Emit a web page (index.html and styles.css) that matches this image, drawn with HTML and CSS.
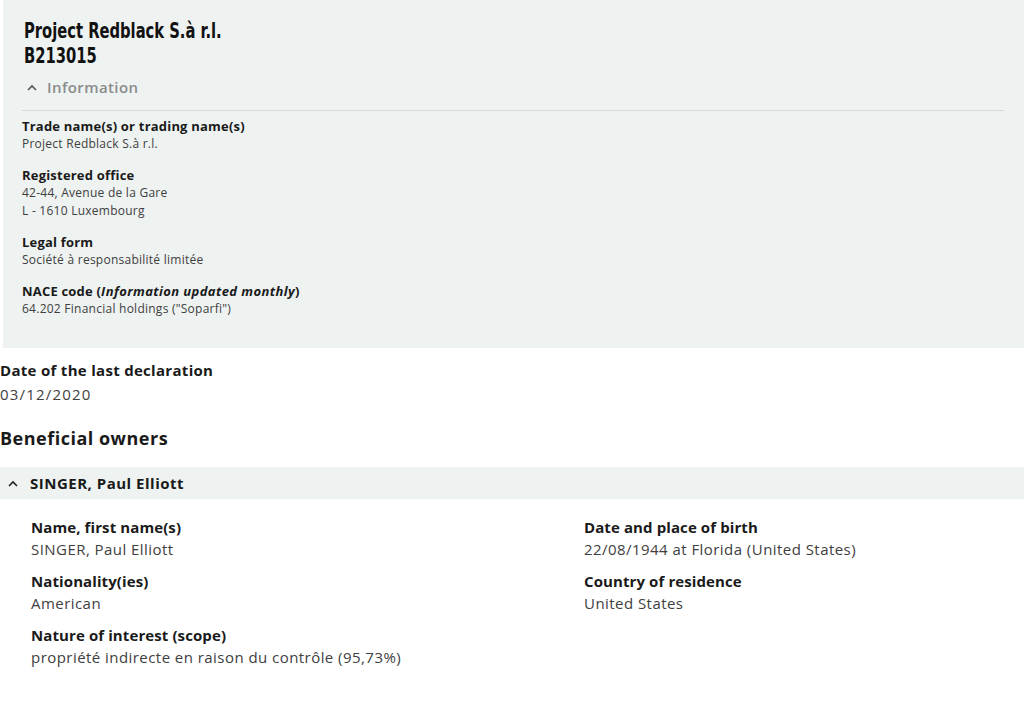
FILE: index.html
```html
<!DOCTYPE html>
<html>
<head>
<meta charset="utf-8">
<link rel="stylesheet" href="styles.css">
</head>
<body>
<div class="page">
  <section class="panel">
    <h1 class="title"><span class="title-line">Project Redblack S.à r.l.</span><span class="title-line">B213015</span></h1>
    <div class="toggle">
      <svg class="chev" width="10" height="7" viewBox="0 0 10 7"><polyline points="1,6 5,2 9,6" fill="none" stroke="#555" stroke-width="1.6"/></svg>
      <span>Information</span>
    </div>
    <hr class="sep">
    <dl class="info">
      <div class="item"><dt>Trade name(s) or trading name(s)</dt><dd>Project Redblack S.à r.l.</dd></div>
      <div class="item"><dt>Registered office</dt><dd>42-44, Avenue de la Gare<br>L - 1610 Luxembourg</dd></div>
      <div class="item"><dt>Legal form</dt><dd>Société à responsabilité limitée</dd></div>
      <div class="item"><dt>NACE code (<em>Information updated monthly</em>)</dt><dd>64.202 Financial holdings ("Soparfi")</dd></div>
    </dl>
  </section>

  <div class="decl">
    <div class="decl-label">Date of the last declaration</div>
    <div class="decl-value">03/12/2020</div>
  </div>

  <h2 class="owners">Beneficial owners</h2>

  <div class="bar">
    <svg class="chev" width="10" height="7" viewBox="0 0 10 7"><polyline points="1,6 5,2 9,6" fill="none" stroke="#222" stroke-width="1.6"/></svg>
    <span>SINGER, Paul Elliott</span>
  </div>

  <div class="owner-grid">
    <div class="field"><div class="fl">Name, first name(s)</div><div class="fv">SINGER, Paul Elliott</div></div>
    <div class="field"><div class="fl">Date and place of birth</div><div class="fv">22/08/1944 at Florida (United States)</div></div>
    <div class="field"><div class="fl">Nationality(ies)</div><div class="fv">American</div></div>
    <div class="field"><div class="fl">Country of residence</div><div class="fv">United States</div></div>
    <div class="field"><div class="fl">Nature of interest (scope)</div><div class="fv">propriété indirecte en raison du contrôle (95,73%)</div></div>
  </div>
</div>
</body>
</html>
```

FILE: styles.css
```css
* { box-sizing: border-box; }
html, body { margin: 0; padding: 0; background: #fff; }
body { font-family: "Open Sans", "Lato", sans-serif; color: #222; width: 1024px; height: 704px; overflow: hidden; }

.panel {
  margin-left: 3px;
  background: #eef2f1;
  height: 348px;
  padding: 19px 20px 0 19px;
}
.title {
  margin: 0 0 0 2px;
  font-family: "DejaVu Sans Condensed", "DejaVu Sans", sans-serif;
  font-weight: 700;
  font-size: 21px;
  line-height: 25px;
  color: #111;
}
.title-line {
  display: block;
  transform: scaleX(0.78);
  transform-origin: left center;
}
.toggle {
  display: flex;
  align-items: center;
  gap: 10px;
  margin: 8px 0 0 5px;
  height: 20px;
  color: #8a8c8c;
  font-weight: 600;
  font-size: 15px;
  letter-spacing: 0.4px;
}
.sep {
  border: 0;
  border-top: 1px solid #d4d8d7;
  margin: 13px 0 0 0;
  height: 0;
}
.info { margin: 6px 0 0 0; display: flex; flex-direction: column; gap: 13px; }
.item dt { font-weight: 700; font-size: 13px; line-height: 18px; color: #1a1a1a; letter-spacing: 0.2px; }
.item dt em { font-style: italic; letter-spacing: 0.4px; }
.item dd { margin: 0; font-size: 12px; line-height: 18px; color: #404040; letter-spacing: 0.25px; }

.decl { margin-top: 12px; }
.decl-label { font-weight: 700; font-size: 15px; line-height: 20px; color: #1a1a1a; letter-spacing: 0.3px; }
.decl-value { font-size: 15px; line-height: 22px; color: #404040; margin-top: 3px; letter-spacing: 1.2px; }

.owners { margin: 21px 0 0 0; font-weight: 700; font-size: 18px; line-height: 25px; color: #1a1a1a; letter-spacing: 0.5px; }

.bar {
  margin-top: 16px;
  background: #eef2f1;
  height: 32px;
  display: flex;
  align-items: center;
  gap: 12px;
  padding-left: 8px;
  font-weight: 700;
  font-size: 15px;
  letter-spacing: 0.5px;
  color: #1a1a1a;
}

.owner-grid {
  display: grid;
  grid-template-columns: 553px 1fr;
  row-gap: 10px;
  padding: 17px 0 0 31px;
}
.fl { font-weight: 700; font-size: 15px; line-height: 22px; color: #1a1a1a; letter-spacing: 0.1px; }
.fv { font-size: 15px; line-height: 22px; color: #404040; letter-spacing: 0.45px; }
```
